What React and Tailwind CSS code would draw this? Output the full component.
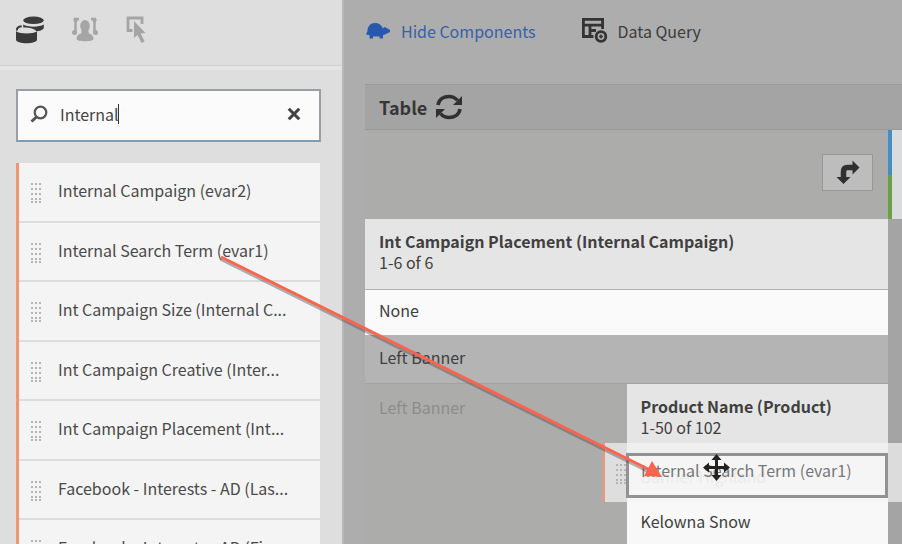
import React from "react";

const components = [
  "Internal Campaign (evar2)",
  "Internal Search Term (evar1)",
  "Int Campaign Size (Internal C...",
  "Int Campaign Creative (Inter...",
  "Int Campaign Placement (Int...",
  "Facebook - Interests - AD (Las...",
  "Facebook - Interests - AD (Fir...",
];

function Grip() {
  return (
    <svg width="12" height="22" viewBox="0 0 12 22" className="shrink-0 text-[#b4b4b4]" fill="currentColor" aria-hidden="true">
      {[1, 5, 9].map((x) => [2, 7, 12, 17, 20].map((y) => <rect key={x + "-" + y} x={x} y={y} width="2" height="2" />))}
    </svg>
  );
}

function DimensionsIcon() {
  return (
    <svg width="30" height="30" viewBox="0 0 30 30" aria-hidden="true" fill="#3a3a3a">
      <ellipse cx="18.5" cy="4.3" rx="10.3" ry="3.7" />
      <path d="M8.200 8.600c4 2.800 16.500 2.800 20.600 0v3.600c-1.500 2-4 2.800-7.500 3-2-2.400-7-3.800-13.100-3.600z" />
      <path d="M2.200 14.500c-1-2.200.8-3.900 4.500-4.300" stroke="#3a3a3a" strokeWidth="2" fill="none" />
      <path d="M1 15.200c4 2.800 16.500 2.900 21 .3v8c0 5-21 5-21 0z" />
    </svg>
  );
}

function SegmentsIcon() {
  return (
    <svg width="28" height="28" viewBox="0 0 28 28" aria-hidden="true" fill="#a5a5a5">
      <ellipse cx="14" cy="10" rx="4.800" ry="6" />
      <path d="M11 13h6l.8 4.500c3.500.8 4.700 2.500 4.700 5.500 0 3-17 3-17 0 0-3 1.200-4.700 4.700-5.500z" />
      <path d="M8 3H4.500v14M20 3h3.500v14" stroke="#a5a5a5" strokeWidth="2.500" fill="none" />
      <circle cx="4.500" cy="4" r="2.200" />
      <circle cx="23.500" cy="4" r="2.200" />
      <circle cx="3.500" cy="16.500" r="2.500" />
      <circle cx="24.500" cy="16.500" r="2.500" />
    </svg>
  );
}

function MetricsIcon() {
  return (
    <svg width="22" height="28" viewBox="0 0 22 28" aria-hidden="true">
      <path d="M7.500 14.500H3V2h14v6" fill="none" stroke="#a5a5a5" strokeWidth="2.800" />
      <path d="M9 5l11.500 12-4.800.4 4 8.100-3.200 1.500-4-8L9 22z" fill="#a5a5a5" />
    </svg>
  );
}

function PuzzleIcon() {
  return (
    <svg width="26" height="20" viewBox="0 0 26 20" aria-hidden="true" fill="#2858ad">
      <path d="M2.500 10c0-4.500 3-8 7.500-8 4 0 6.500 2 7.800 5.200L20 6l5 3v2l-5 2.500-2 .8v3.200h-3.500V15.500H8v2H4.500V14L1 13.500z" />
    </svg>
  );
}

function DataQueryIcon() {
  return (
    <svg width="28" height="27" viewBox="0 0 28 27" aria-hidden="true" fill="none" stroke="#333" strokeWidth="2.800">
      <path d="M12.500 19.500H2.400V2.400h19.200v9.600M2 8.200h20M9 8v11.500M9 13.500h6" />
      <circle cx="20" cy="19.500" r="4.800" />
      <path d="M20 17.500v4M18 19.500h4" strokeWidth="1.500" />
    </svg>
  );
}

function RefreshIcon() {
  return (
    <svg width="28" height="26" viewBox="0 0 28 26" aria-hidden="true" fill="none" stroke="#303030" strokeWidth="3.600">
      <path d="M3 11C4 5 9 2.500 14 2.500c4 0 6.500 1.500 8.500 4" />
      <path d="M25 15c-1 6-6 8.500-11 8.500-4 0-6.500-1.500-8.500-4" />
      <path d="M27 2v9h-9zM1 24v-9h9z" fill="#303030" stroke="none" />
    </svg>
  );
}

function TurnIcon() {
  return (
    <svg width="24" height="25" viewBox="0 0 24 25" aria-hidden="true">
      <path d="M7.500 18V12c0-3 1-4.500 4-4.500h6" fill="none" stroke="#303030" strokeWidth="5.500" />
      <path d="M16.500 0.500l7 7-7 7zM.5 17h14l-7 7z" fill="#303030" />
    </svg>
  );
}

function SearchIcon() {
  return (
    <svg width="18" height="18" viewBox="0 0 18 18" aria-hidden="true" fill="none" stroke="#555" strokeWidth="2.200">
      <circle cx="10.500" cy="7.500" r="5.800" />
      <path d="M6.500 12L1.500 16.500" strokeWidth="3" />
    </svg>
  );
}

function Sidebar() {
  return (
    <aside className="flex w-[342px] shrink-0 flex-col overflow-hidden bg-[#dedede]">
      <nav className="flex h-[66px] shrink-0 items-start gap-[26px] border-b border-[#d0d0d0] px-[15px] pt-4">
        <button type="button" aria-label="Dimensions"><DimensionsIcon /></button>
        <button type="button" aria-label="Segments"><SegmentsIcon /></button>
        <button type="button" aria-label="Metrics"><MetricsIcon /></button>
      </nav>
      <div className="border-t-4 border-[#e5e5e5] pt-[19px] pr-[21px] pl-4">
        <div className="flex h-[53px] items-center border-2 border-[#9a9ea6] border-b-[#7c9db5] bg-[#fbfbfb] pr-[18px] pb-1 pl-3">
          <SearchIcon />
          <label htmlFor="search" className="sr-only">Search components</label>
          <div className="ml-3 flex flex-1 items-center">
            <input id="search" type="text" defaultValue="Internal" className="h-8 w-[58px] bg-transparent text-[16px] text-[#444] outline-none" />
            <span className="h-5 w-px bg-[#333]" />
          </div>
          <button type="button" aria-label="Clear search" className="text-[#444]">
            <svg width="14" height="14" viewBox="0 0 16 16" stroke="currentColor" strokeWidth="3.600" aria-hidden="true"><path d="M2 2l12 12M14 2L2 14" /></svg>
          </button>
        </div>
      </div>
      <ul className="mt-[21px] mr-[22px] ml-4 border-l-[3px] border-[#ef9774]">
        {components.map((name) => (
          <li key={name} className="flex h-[60px] items-center gap-[16px] border-b-2 border-[#dcdcdc] bg-[#f4f4f4] pl-[11px] text-[16px] text-[#4a4a4a] even:h-[59px]">
            <Grip />
            <span className="truncate pb-1">{name}</span>
          </li>
        ))}
      </ul>
    </aside>
  );
}

function FreeformTable() {
  return (
    <table className="w-full table-fixed border-collapse text-left text-[16px] leading-[21px] text-[#404040]">
      <tbody>
        <tr className="h-[89px] bg-[#acacaa]">
          <td colSpan={2} className="pr-[15px] pb-1">
            <button type="button" aria-label="Pivot" className="ml-auto flex h-[37px] w-[51px] items-center justify-center border border-[#989898] bg-[#bdbdbd]">
              <TurnIcon />
            </button>
          </td>
        </tr>
        <tr className="h-[70px] border-b border-[#b0b0b0] bg-[#e5e5e5]">
          <th colSpan={2} scope="col" className="px-[14px] pb-[3px] font-normal">
            <div className="font-bold">Int Campaign Placement (Internal Campaign)</div>
            <div>1-6 of 6</div>
          </th>
        </tr>
        <tr className="h-[46px] bg-[#fafafa]"><td colSpan={2} className="px-[14px] pb-[3px]">None</td></tr>
        <tr className="h-[48px] border-b border-[#a2a2a2] bg-[#b4b4b4]"><td colSpan={2} className="px-[14px] pb-[3px]">Left Banner</td></tr>
        <tr className="h-[70px]">
          <td rowSpan={3} className="bg-[#acacaa] px-[14px] pt-[13px] align-top text-[#8d8d8d]">Left Banner</td>
          <th scope="col" className="bg-[#e5e5e5] px-[14px] pb-[3px] font-normal">
            <div className="font-bold">Product Name (Product)</div>
            <div>1-50 of 102</div>
          </th>
        </tr>
        <tr className="h-[46px] bg-[#f8f8f8]"><td className="px-[14px] text-[#d4d4d4]">Banner Highland</td></tr>
        <tr className="h-[48px] bg-[#f8f8f8]"><td className="px-[14px] pb-[3px]">Kelowna Snow</td></tr>
      </tbody>
    </table>
  );
}

export default function App() {
  return (
    <div className="relative flex h-screen overflow-hidden bg-[#adadad] font-['Noto_Sans_CJK_SC','Open_Sans',sans-serif]">
      <Sidebar />
      <main className="flex min-w-0 flex-1 flex-col border-l-2 border-[#b8b8b8]">
        <header className="flex h-[66px] shrink-0 items-center gap-[46px] pb-[5px] pl-[21px] text-[16px]">
          <button type="button" className="flex items-center gap-[10px] text-[#3560aa]"><PuzzleIcon />Hide Components</button>
          <button type="button" className="flex items-center gap-2 text-[#3c3c3c]"><DataQueryIcon />Data Query</button>
        </header>
        <section className="mt-[18px] ml-[21px] min-h-0 flex-1 overflow-hidden bg-[#a4a4a4]">
          <div className="flex h-[46px] items-center gap-2 border-t border-b border-[#999] pl-[14px]">
            <h2 className="text-[18px] font-bold text-[#363636]">Table</h2>
            <button type="button" aria-label="Refresh"><RefreshIcon /></button>
          </div>
          <div className="flex">
            <div className="min-w-0 flex-1"><FreeformTable /></div>
            <div className="flex h-[89px] w-[14px] shrink-0">
              <div className="flex w-1 flex-col"><div className="flex-1 bg-[#438fc4]" /><div className="flex-1 bg-[#6ba043]" /></div>
              <div className="flex-1 bg-[#d9dbdc]" />
            </div>
          </div>
        </section>
      </main>
      <div className="absolute top-[443px] left-[602px] flex h-[59px] w-[300px] items-center gap-[14px] border-l-[3px] border-[#dc9c85] bg-[#f4f4f4]/70 pl-[10px] text-[16px] text-[#777]">
        <Grip />
        <span className="pb-[5px]">Internal Search Term (evar1)</span>
      </div>
      <div className="absolute top-[453px] left-[626px] h-[45px] w-[262px] border-[3px] border-[#929292]" />
      <svg className="pointer-events-none absolute top-0 left-0" width="902" height="544" viewBox="0 0 902 544" aria-hidden="true">
        <path d="M221 259.500L649 472" stroke="#444" strokeOpacity=".4" strokeWidth="3" />
        <path d="M716.500 457v21M706 467.500h21" stroke="#222" strokeWidth="3" />
        <path d="M716.500 454l5 6h-10zM716.500 481l5-6h-10zM703 467.500l6-5v10zM730 467.500l-6-5v10z" fill="#222" />
        <path d="M221 257L650 470" stroke="#fc6450" strokeWidth="3" />
        <path d="M662 477l-18-1 8-15z" fill="#fc6450" />
      </svg>
    </div>
  );
}
